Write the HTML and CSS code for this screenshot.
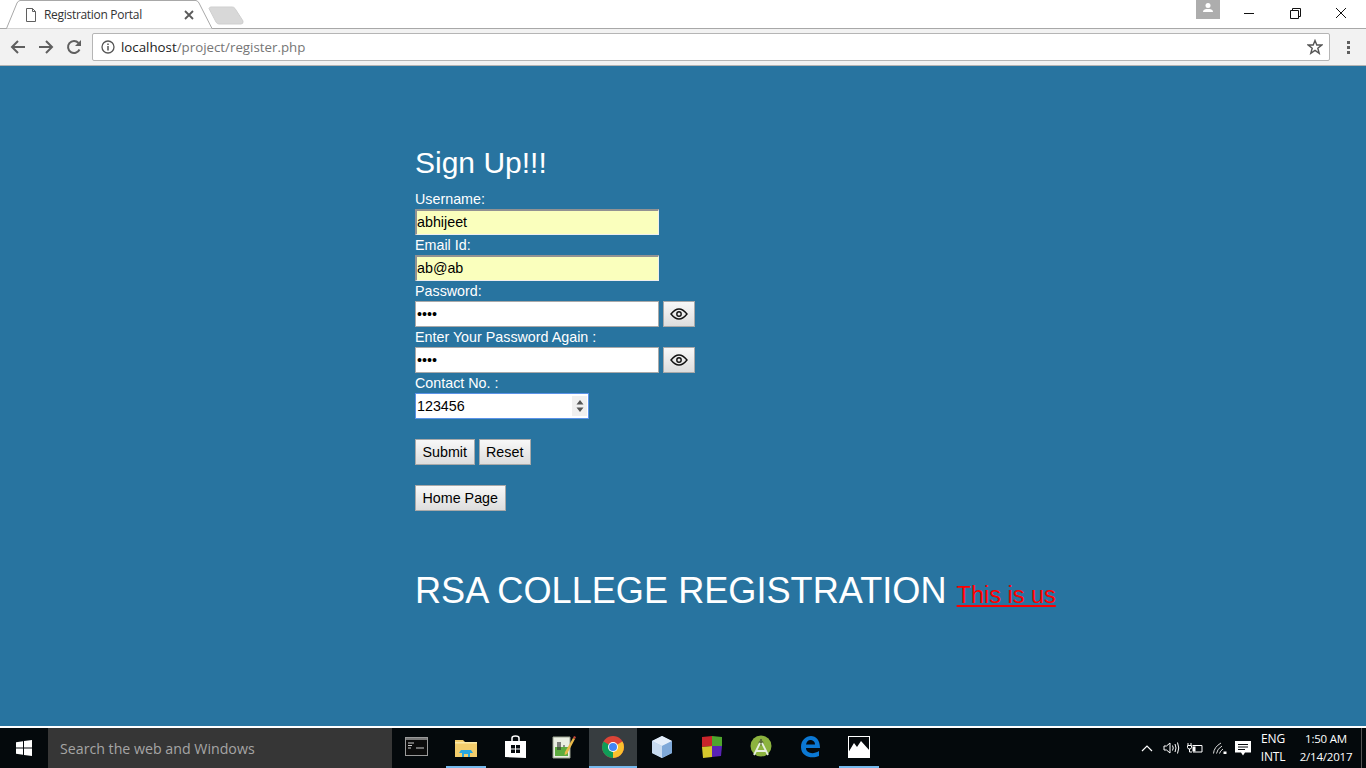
FILE: index.html
```html
<!DOCTYPE html>
<html lang="en">
  <head>
    <meta charset="UTF-8" />
    <meta name="viewport" content="width=device-width, initial-scale=1.0" />
    <title>Registration Portal</title>

    <link rel="stylesheet" href="styles.css">
  </head>
  <body>
    <header class="browser">
      <div class="tabstrip">
        <svg class="tab-shape" width="250" height="29" viewBox="0 0 250 29">
          <path d="M0 28.5H6.5L17 3Q18 1 20 .5H196Q198 1 199 3L212 28.5H250" fill="#fff" stroke="#a8a8a8" />
          <path d="M209 8.5Q209.500 7 211 7H232Q234 7 235 8.500L243 21Q243.500 24 241 24H219Q217 24 216 22Z" fill="#d8d8d8" stroke="#cfcfcf" />
        </svg>
        <svg class="tab-page" width="12" height="14" viewBox="0 0 12 14"><path d="M1.500.5H7.500L10.500 3.500V13.500H1.500ZM7.500.5V3.500H10.500" fill="none" stroke="#5f5f5f" /></svg>
        <span class="tab-title">Registration Portal</span>
        <svg class="tab-close" width="10" height="10" viewBox="0 0 10 10"><path d="M1 1L9 9M9 1L1 9" stroke="#5a5a5a" stroke-width="1.800" /></svg>

        <div class="window-controls">
          <div class="avatar">
            <svg width="12" height="12" viewBox="0 0 12 12"><circle cx="6" cy="3.500" r="2.500" fill="#fff" /><path d="M1 10Q1 7.500 4 7H8Q11 7.500 11 10Z" fill="#fff" /></svg>
          </div>
          <svg class="win-btn" width="46" height="28" viewBox="0 0 46 28"><path d="M18 13.500H28" stroke="#111" /></svg>
          <svg class="win-btn" width="46" height="28" viewBox="0 0 46 28"><path d="M18.500 10.500H26.500V18.500H18.500ZM20.500 10.500V8.500H28.500V16.500H26.500" fill="none" stroke="#111" /></svg>
          <svg class="win-btn" width="46" height="28" viewBox="0 0 46 28"><path d="M18 8L28 18M28 8L18 18" stroke="#111" /></svg>
        </div>
      </div>

      <div class="toolbar">
        <svg class="nav-icon" width="16" height="16" viewBox="0 0 16 16"><path d="M15 8H2M8 2L2 8L8 14" fill="none" stroke="#5f5f5f" stroke-width="2" /></svg>
        <svg class="nav-icon" width="16" height="16" viewBox="0 0 16 16"><path d="M1 8H14M8 2L14 8L8 14" fill="none" stroke="#5f5f5f" stroke-width="2" /></svg>
        <svg class="nav-icon" width="16" height="16" viewBox="0 0 16 16"><path d="M13.500 10.500A6 6 0 1 1 12.500 4" fill="none" stroke="#5f5f5f" stroke-width="2" /><path d="M15 1V7H9Z" fill="#5f5f5f" /></svg>
        <div class="omnibox">
          <svg width="14" height="14" viewBox="0 0 14 14"><circle cx="7" cy="7" r="6" fill="none" stroke="#555" stroke-width="1.300" /><path d="M7 6V10.500M7 3.500V5" stroke="#555" stroke-width="1.500" /></svg>
          <span class="url"><b>localhost</b>/project/register.php</span>
          <svg class="star" width="16" height="16" viewBox="0 0 16 16"><path d="M8 1.500L9.800 6H14.800L10.800 9.200L12.200 14.300L8 11.400L3.800 14.300L5.200 9.200L1.200 6H6.200Z" fill="none" stroke="#555" stroke-width="1.400" /></svg>
        </div>
        <div class="menu-dots"><i></i><i></i><i></i></div>
      </div>
    </header>

    <main class="page">
      <h2 class="title">Sign Up!!!</h2>

      <form class="signup">
        <label class="field-label">Username:</label>
        <input class="field autofill" type="text" value="abhijeet" />

        <label class="field-label">Email Id:</label>
        <input class="field autofill" type="text" value="ab@ab" />

        <label class="field-label">Password:</label>
        <div class="field-row">
          <input class="field" type="password" value="1234" />
          <button type="button" class="btn eye">
            <svg width="18" height="12" viewBox="0 0 18 12"><path d="M1 6Q5 1 9 1T17 6Q13 11 9 11T1 6Z" fill="none" stroke="#111" stroke-width="1.400" /><circle cx="9" cy="6" r="2.200" fill="none" stroke="#111" stroke-width="1.400" /></svg>
          </button>
        </div>

        <label class="field-label">Enter Your Password Again :</label>
        <div class="field-row">
          <input class="field" type="password" value="1234" />
          <button type="button" class="btn eye">
            <svg width="18" height="12" viewBox="0 0 18 12"><path d="M1 6Q5 1 9 1T17 6Q13 11 9 11T1 6Z" fill="none" stroke="#111" stroke-width="1.400" /><circle cx="9" cy="6" r="2.200" fill="none" stroke="#111" stroke-width="1.400" /></svg>
          </button>
        </div>

        <label class="field-label">Contact No. :</label>
        <div class="number-box">
          <input type="text" value="123456" />
          <span class="spinner">
            <svg width="8" height="14" viewBox="0 0 8 14"><path d="M4 1L7.500 5.500H.5ZM4 13L.5 8.500H7.500Z" fill="#555" /></svg>
          </span>
        </div>

        <div class="actions">
          <button type="submit" class="btn">Submit</button>
          <button type="reset" class="btn">Reset</button>
        </div>
        <div class="actions">
          <button type="button" class="btn">Home Page</button>
        </div>
      </form>

      <p class="college">RSA COLLEGE REGISTRATION <a href="#">This is us</a></p>
    </main>

    <footer class="taskbar">
      <div class="start">
        <svg width="16" height="16" viewBox="0 0 16 16"><path d="M0 2.300L7 1.300V7.500H0ZM8 1.100L16 0V7.500H8ZM0 8.500H7V14.700L0 13.700ZM8 8.500H16V16L8 14.900Z" fill="#fff" /></svg>
      </div>
      <div class="search">Search the web and Windows</div>

      <div class="apps">
        <div class="app">
          <svg width="24" height="20" viewBox="0 0 24 20"><rect x=".5" y=".5" width="22" height="18" fill="#0c0c0c" stroke="#9a9a9a" /><rect x="1" y="1" width="21" height="2" fill="#777" /><path d="M3 6H9M3 8.500H7M3 11H6M11 11H19" stroke="#ccc" /></svg>
        </div>
        <div class="app open">
          <svg width="22" height="19" viewBox="0 0 22 19"><path d="M0 2H8L10 4H22V19H0Z" fill="#f3cd6c" /><rect y="4" width="22" height="1.500" fill="#fbe9a8" /><path d="M6 12H16L18 15H15V19H7V15H4Z" fill="#2aa7e0" /><rect x="9" y="16" width="4" height="3" fill="#f3cd6c" /></svg>
        </div>
        <div class="app">
          <svg width="21" height="24" viewBox="0 0 21 24"><path d="M7 6V3Q7 1 10.500 1T14 3V6" fill="none" stroke="#fff" stroke-width="1.500" /><path d="M0 6H21V23L0 22Z" fill="#fff" /><path d="M6 10H10V13.500H6ZM11 10H15V13.500H11ZM6 14.500H10V18H6ZM11 14.500H15V18H11Z" fill="#05090c" /></svg>
        </div>
        <div class="app">
          <svg width="24" height="24" viewBox="0 0 24 24"><path d="M1 2H18V23H1Z" fill="#eaeee2" stroke="#9aa28f" /><rect x="3" y="12" width="13" height="9" fill="#5cab3e" /><path d="M6 7V15M8 7V15M11 11H13" stroke="#333" stroke-width="1.200" /><path d="M13 17L21 3L23 4L15 19L12.500 20Z" fill="#e9b949" /><path d="M21 3L22 1L24 2L23 4Z" fill="#c9483a" /></svg>
        </div>
        <div class="app open active">
          <svg width="22" height="22" viewBox="0 0 22 22"><circle cx="11" cy="11" r="11" fill="#db4437" /><path d="M11 11L20.500 5.500A11 11 0 0 1 11 22Z" fill="#fbc02d" /><path d="M11 11V22A11 11 0 0 1 1.500 5.500Z" fill="#0f9d58" /><circle cx="11" cy="11" r="5" fill="#fff" /><circle cx="11" cy="11" r="4" fill="#4285f4" /></svg>
        </div>
        <div class="app">
          <svg width="24" height="24" viewBox="0 0 24 24"><path d="M12 1L22 6V18L12 23L2 18V6Z" fill="#a9c6e8" /><path d="M12 1L22 6L12 11L2 6Z" fill="#e4eefa" /><path d="M12 11V23L2 18V6Z" fill="#c8dbf0" /><path d="M12 11L22 6V18L12 23Z" fill="#7fa9d9" /></svg>
        </div>
        <div class="app">
          <svg width="22" height="24" viewBox="0 0 22 24"><path d="M1 2L11 1V11L1 12Z" fill="#c9252b" /><path d="M11 1L21 2V11L11 11Z" fill="#4fa52d" /><path d="M1 12L11 11V22L2 23Z" fill="#d6c72c" /><path d="M11 11H21L20 21L11 22Z" fill="#5a23b5" /></svg>
        </div>
        <div class="app">
          <svg width="24" height="24" viewBox="0 0 24 24"><circle cx="12" cy="11" r="10.500" fill="#8cb33f" /><circle cx="12" cy="8" r="2.500" fill="#5a6b3a" /><path d="M11 8L5 20M13 8L19 20M7 16H17" fill="none" stroke="#e8efe0" stroke-width="1.800" /><path d="M12 4V6" stroke="#5a6b3a" stroke-width="2" /></svg>
        </div>
        <div class="app">
          <svg width="20" height="22" viewBox="0 0 20 22"><path d="M1 11C1 4 6 0 11 0C16 0 20 4 20 12H6C6 17 13 19 19 15V20C12 23 1 21 1 11ZM6 8.500H15C15 5 12 4 10.500 4C8 4 6.500 6 6 8.500Z" fill="#0b78d4" /></svg>
        </div>
        <div class="app open">
          <svg width="22" height="22" viewBox="0 0 22 22"><rect x=".5" y=".5" width="21" height="21" fill="#05090c" stroke="#fff" /><path d="M0 17L6 7L9 11L13 5L22 15V22H0Z" fill="#fff" /></svg>
        </div>
      </div>

      <div class="tray">
        <svg width="12" height="8" viewBox="0 0 12 8"><path d="M1 7L6 2L11 7" fill="none" stroke="#fff" stroke-width="1.200" /></svg>
        <svg class="tray-volume" width="17" height="14" viewBox="0 0 17 14"><path d="M1 5H3.500L7 2V12L3.500 9H1Z" fill="none" stroke="#fff" /><path d="M9.500 4.500Q11 7 9.500 9.500M12 3Q14 7 12 11M14.500 1.500Q17 7 14.500 12.500" fill="none" stroke="#fff" /></svg>
        <svg class="tray-power" width="16" height="12" viewBox="0 0 16 12"><path d="M5.500 3.500H15V10H6M1 1V3M4 1V3M.5 3.500H4.500V5.500Q4.500 7 2.500 7T.5 5.500ZM2.500 7V10H5" fill="none" stroke="#fff" /><rect x="5.500" y="4.500" width="3" height="5" fill="#fff" /></svg>
        <svg class="tray-wifi" width="14" height="12" viewBox="0 0 14 12"><path d="M.5 11.500Q1 5 8 1M3.500 11.500Q4 7 9 4M6.500 11.500Q7 9 10 7" fill="none" stroke="#ddd" /><rect x="10.500" y="9.500" width="3" height="2.500" fill="#fff" /></svg>
        <svg class="tray-note" width="16" height="15" viewBox="0 0 16 15"><path d="M0 0H16V11.500H10L8 14.500L6 11.500H0Z" fill="#fff" /><path d="M3 3.500H13M3 6H13M3 8.500H10" stroke="#05090c" /></svg>
        <div class="tray-lang">ENG<br />INTL</div>
        <div class="tray-clock">1:50 AM<br />2/14/2017</div>
        <div class="show-desktop"></div>
      </div>
    </footer>
  </body>
</html>
```

FILE: styles.css
```css
* {
  margin: 0;
  padding: 0;
  box-sizing: border-box;
}

body {
  display: flex;
  flex-direction: column;
  height: 768px;
  overflow: hidden;
  font-family: "Liberation Sans", Arial, sans-serif;
}

/* browser chrome */
.browser {
  flex: none;
  font-family: "Open Sans", sans-serif;
}

.tabstrip {
  position: relative;
  display: flex;
  align-items: flex-start;
  height: 29px;
  background: #fff;
  border-bottom: 1px solid #a8a8a8;
}

.tab-shape {
  position: absolute;
  top: 0;
  left: 0;
}

.tab-page {
  position: absolute;
  top: 8px;
  left: 25px;
}

.tab-title {
  position: absolute;
  top: 7px;
  left: 44px;
  font-size: 12px;
  line-height: 16px;
  letter-spacing: -0.3px;
  color: #333;
}

.tab-close {
  position: absolute;
  top: 10px;
  left: 184px;
}

.window-controls {
  display: flex;
  align-items: flex-start;
  margin-left: auto;
  padding-right: 2px;
}

.avatar {
  display: flex;
  align-items: center;
  justify-content: center;
  width: 24px;
  height: 19px;
  margin-right: 6px;
  padding-bottom: 3px;
  background: #adadad;
}

.toolbar {
  display: flex;
  align-items: center;
  gap: 12px;
  height: 37px;
  padding-left: 10px;
  background: #f2f2f2;
  border-bottom: 1px solid #b4b4b4;
}

.omnibox {
  display: flex;
  align-items: center;
  gap: 6px;
  width: 1238px;
  height: 28px;
  margin-left: -2px;
  padding: 0 6px 0 8px;
  background: #fff;
  border: 1px solid #b5b5b5;
  border-radius: 2px;
}

.url {
  font-size: 13.3px;
  color: #767676;
}

.url b {
  font-weight: 400;
  color: #222;
}

.star {
  margin-left: auto;
}

.menu-dots {
  display: flex;
  flex-direction: column;
  gap: 2px;
  margin-left: 5px;
}

.menu-dots i {
  width: 3px;
  height: 3px;
  background: #5f5f5f;
}

/* page */
.page {
  flex: 1;
  padding: 78px 0 0 415px;
  color: #fff;
  background: #2874a0;
}

.title {
  height: 45px;
  font-size: 30px;
  font-weight: 400;
  line-height: 38px;
}

.field-label {
  display: block;
  height: 20px;
  font-size: 14.3px;
  line-height: 17px;
  padding-top: 2px;
}

.field {
  display: block;
  width: 244px;
  height: 26px;
  padding: 0 2px 0 1px;
  font: 14.3px "Liberation Sans", Arial, sans-serif;
  color: #000;
  background: #fff;
  border: 1px solid #a9a9a9;
}

.autofill {
  background: #faffbd;
  border-width: 2px 1px 1px 2px;
  border-color: #929292 #eeeeee #eeeeee #929292;
  border-style: solid;
  padding: 0 2px 1px 0;
}

.field-row {
  display: flex;
  gap: 4px;
}

.btn {
  height: 26px;
  padding: 0 6.5px;
  font: 14.3px "Liberation Sans", Arial, sans-serif;
  color: #000;
  background: linear-gradient(#f8f8f8, #dddddd);
  border: 1px solid #a9a9a9;
}

.eye {
  display: flex;
  align-items: center;
  justify-content: center;
  width: 32px;
  padding: 0;
}

.number-box {
  display: flex;
  align-items: center;
  width: 174px;
  height: 26px;
  padding: 0 1px 0 1px;
  background: #fff;
  border: 1px solid #5b93e8;
}

.number-box input {
  flex: 1;
  width: 100%;
  font: 14.3px "Liberation Sans", Arial, sans-serif;
  color: #000;
  border: none;
  outline: none;
  background: none;
}

.spinner {
  display: flex;
  align-items: center;
  justify-content: center;
  width: 15px;
  height: 20px;
  background: #f0f0f0;
}

.actions {
  display: flex;
  gap: 4px;
  margin-top: 20px;
}

.college {
  margin-top: 58px;
  font-size: 36.15px;
  line-height: 44px;
}

.college a {
  font-size: 23.5px;
  color: #ff0000;
}

/* taskbar */
.taskbar {
  flex: none;
  display: flex;
  height: 42px;
  color: #fff;
  font-family: "Open Sans", sans-serif;
  background: #04090c;
  border-top: 2px solid #fff;
}

.start {
  display: flex;
  align-items: center;
  justify-content: center;
  width: 48px;
}

.search {
  width: 344px;
  padding-left: 12px;
  font-size: 14.2px;
  line-height: 41px;
  color: #a5a5a5;
  background: #363636;
}

.apps {
  display: flex;
  gap: 1.1px;
  margin-left: 1px;
}

.app {
  display: flex;
  align-items: center;
  justify-content: center;
  width: 48px;
  height: 40px;
  padding-bottom: 2px;
}

.app.open {
  background: linear-gradient(#76b9ed, #76b9ed) no-repeat center bottom / 40px 2px;
}

.app.active {
  background: linear-gradient(#76b9ed, #76b9ed) no-repeat center bottom / 100% 2px, #373d40;
}

.tray {
  display: flex;
  align-items: center;
  margin-left: auto;
}

.tray-volume {
  margin-left: 10px;
}

.tray-power {
  margin-left: 7px;
}

.tray-wifi {
  margin-left: 10px;
}

.tray-note {
  margin-left: 8px;
}

.tray-lang {
  width: 40px;
  margin-left: 2px;
  margin-right: 3px;
  font-size: 12px;
  line-height: 18px;
  letter-spacing: -0.2px;
  text-align: center;
}

.tray-clock {
  width: 60px;
  font-size: 11.5px;
  line-height: 18px;
  letter-spacing: -0.2px;
  text-align: center;
}

.show-desktop {
  width: 1px;
  height: 40px;
  margin: 0 4px 0 5px;
  background: #555;
}
```
